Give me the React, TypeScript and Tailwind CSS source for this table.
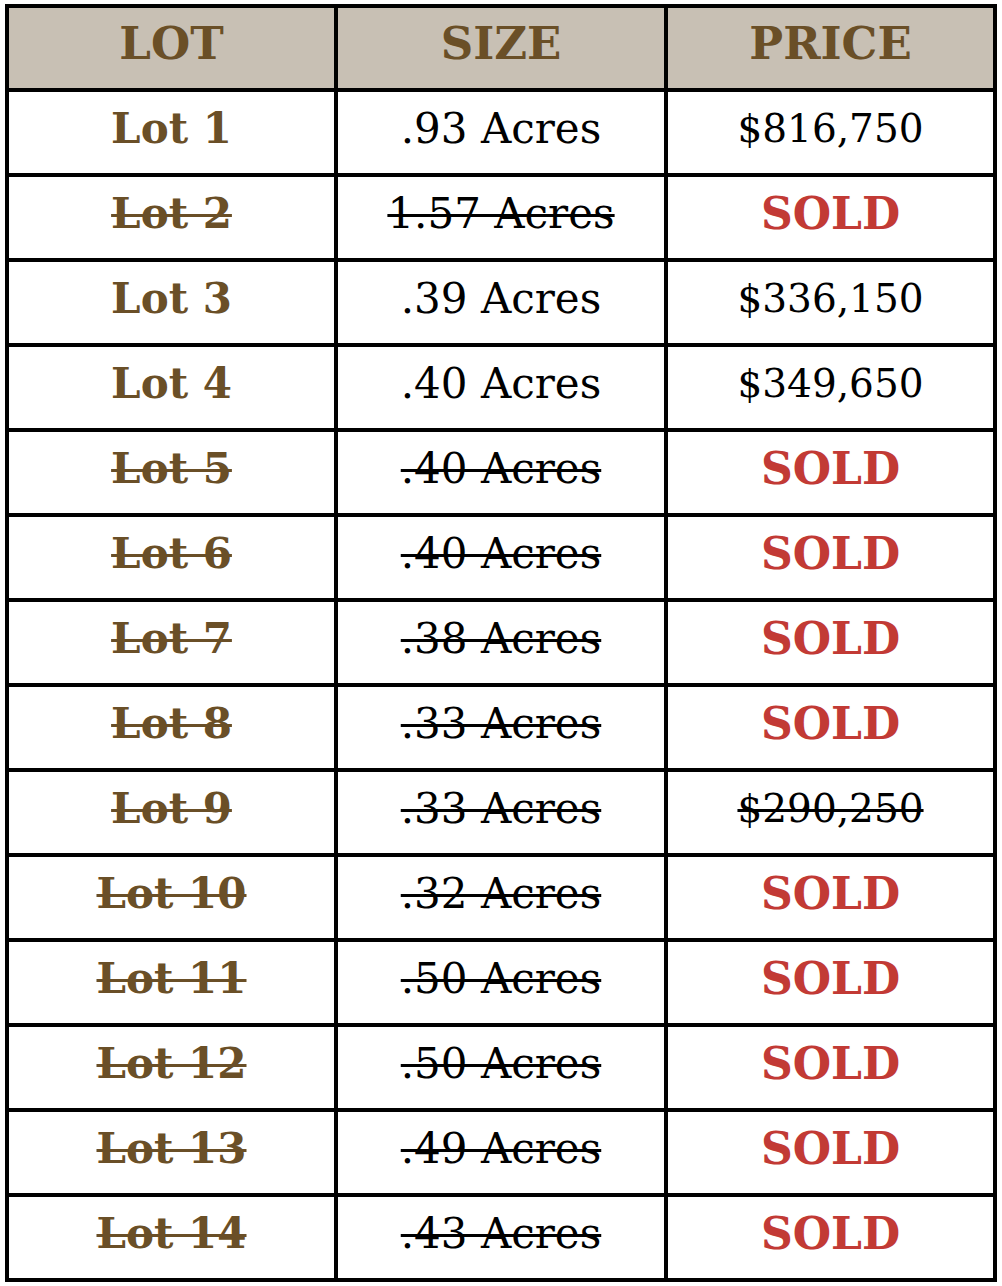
import React from 'react';

type Row = { lot: string; size: string; price: string | null; sold: boolean; priceStruck?: boolean };

const rows: Row[] = [
  { lot: 'Lot 1', size: '.93 Acres', price: '$816,750', sold: false },
  { lot: 'Lot 2', size: '1.57 Acres', price: null, sold: true },
  { lot: 'Lot 3', size: '.39 Acres', price: '$336,150', sold: false },
  { lot: 'Lot 4', size: '.40 Acres', price: '$349,650', sold: false },
  { lot: 'Lot 5', size: '.40 Acres', price: null, sold: true },
  { lot: 'Lot 6', size: '.40 Acres', price: null, sold: true },
  { lot: 'Lot 7', size: '.38 Acres', price: null, sold: true },
  { lot: 'Lot 8', size: '.33 Acres', price: null, sold: true },
  { lot: 'Lot 9', size: '.33 Acres', price: '$290,250', sold: true, priceStruck: true },
  { lot: 'Lot 10', size: '.32 Acres', price: null, sold: true },
  { lot: 'Lot 11', size: '.50 Acres', price: null, sold: true },
  { lot: 'Lot 12', size: '.50 Acres', price: null, sold: true },
  { lot: 'Lot 13', size: '.49 Acres', price: null, sold: true },
  { lot: 'Lot 14', size: '.43 Acres', price: null, sold: true },
];

const CELL = 'flex h-[81px] items-center justify-center bg-white pb-[8px] leading-none';
const HEAD = 'flex h-[80px] items-center justify-center bg-[#c8c0b4] pb-[10px] text-[45px] font-bold leading-none text-[#6a4f27]';

export default function App() {
  return (
    <div className="min-h-screen bg-white pl-[5px] pt-[4px] font-['DejaVu_Serif',serif]">
      <div className="grid w-[992px] grid-cols-[325px_326px_325px] gap-[4px] bg-black p-[4px]">
        <div className={HEAD}>LOT</div>
        <div className={HEAD}>SIZE</div>
        <div className={HEAD}>PRICE</div>

        {rows.map((r) => (
          <React.Fragment key={r.lot}>
            <div className={CELL}>
              <span
                className={
                  'text-[42px] font-bold text-[#6a4f27] ' +
                  (r.sold ? 'line-through decoration-[3px]' : '')
                }
              >
                {r.lot}
              </span>
            </div>
            <div className={CELL}>
              <span
                className={
                  'text-[42px] text-black ' + (r.sold ? 'line-through decoration-[3px]' : '')
                }
              >
                {r.size}
              </span>
            </div>
            <div className={CELL}>
              {r.price ? (
                <span
                  className={
                    'text-[39px] text-black ' +
                    (r.priceStruck ? 'line-through decoration-[3px]' : '')
                  }
                >
                  {r.price}
                </span>
              ) : (
                <span className="text-[44px] font-bold text-[#c23a35]">SOLD</span>
              )}
            </div>
          </React.Fragment>
        ))}
      </div>
    </div>
  );
}
